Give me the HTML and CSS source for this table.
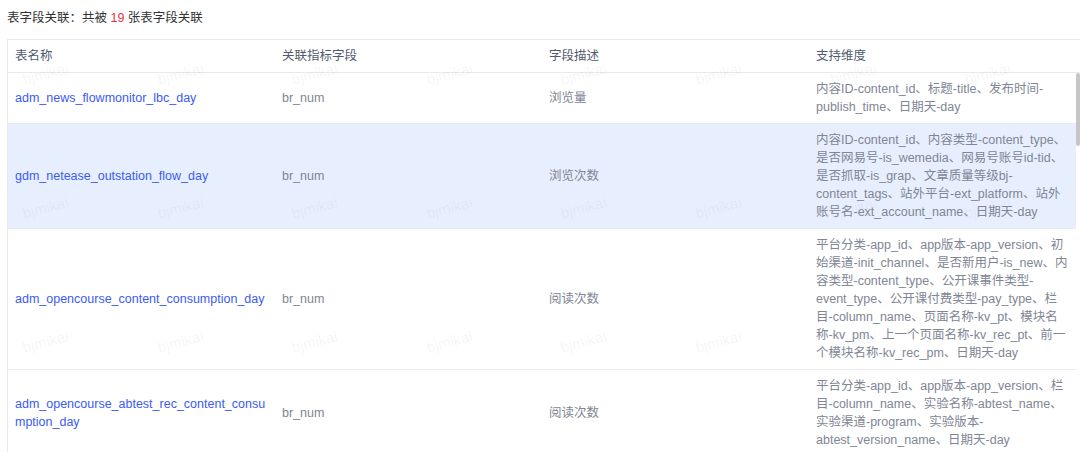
FILE: index.html
```html
<!DOCTYPE html>
<html lang="zh-CN">
<head>
<meta charset="utf-8">
<title>表字段关联</title>
<link rel="stylesheet" href="styles.css">
</head>
<body>
<div class="page">
  <div class="title">表字段关联：共被 <span class="count">19</span> 张表字段关联</div>
  <div class="table">
    <div class="row head">
      <div class="cell">表名称</div>
      <div class="cell">关联指标字段</div>
      <div class="cell">字段描述</div>
      <div class="cell">支持维度</div>
    </div>
    <div class="body-wrap">
      <div class="body">
        <div class="row">
          <div class="cell link">adm_news_flowmonitor_lbc_day</div>
          <div class="cell">br_num</div>
          <div class="cell">浏览量</div>
          <div class="cell">内容ID-content_id、标题-title、发布时间-publish_time、日期天-day</div>
        </div>
        <div class="row hover">
          <div class="cell link">gdm_netease_outstation_flow_day</div>
          <div class="cell">br_num</div>
          <div class="cell">浏览次数</div>
          <div class="cell">内容ID-content_id、内容类型-content_type、是否网易号-is_wemedia、网易号账号id-tid、是否抓取-is_grap、文章质量等级bj-content_tags、站外平台-ext_platform、站外账号名-ext_account_name、日期天-day</div>
        </div>
        <div class="row">
          <div class="cell link">adm_opencourse_content_consumption_day</div>
          <div class="cell">br_num</div>
          <div class="cell">阅读次数</div>
          <div class="cell">平台分类-app_id、app版本-app_version、初始渠道-init_channel、是否新用户-is_new、内容类型-content_type、公开课事件类型-event_type、公开课付费类型-pay_type、栏目-column_name、页面名称-kv_pt、模块名称-kv_pm、上一个页面名称-kv_rec_pt、前一个模块名称-kv_rec_pm、日期天-day</div>
        </div>
        <div class="row">
          <div class="cell link">adm_opencourse_abtest_rec_content_consumption_day</div>
          <div class="cell">br_num</div>
          <div class="cell">阅读次数</div>
          <div class="cell">平台分类-app_id、app版本-app_version、栏目-column_name、实验名称-abtest_name、实验渠道-program、实验版本-abtest_version_name、日期天-day</div>
        </div>
      </div>
      <div class="scrollbar"><div class="thumb"></div></div>
    </div>
  </div>
  <div class="watermark" aria-hidden="true">
    <span>bjmikai</span><span>bjmikai</span><span>bjmikai</span><span>bjmikai</span><span>bjmikai</span><span>bjmikai</span><span>bjmikai</span><span>bjmikai</span>
    <span>bjmikai</span><span>bjmikai</span><span>bjmikai</span><span>bjmikai</span><span>bjmikai</span><span>bjmikai</span><span>bjmikai</span><span>bjmikai</span>
    <span>bjmikai</span><span>bjmikai</span><span>bjmikai</span><span>bjmikai</span><span>bjmikai</span><span>bjmikai</span><span>bjmikai</span><span>bjmikai</span>
  </div>
</div>
</body>
</html>
```

FILE: styles.css
```css
* { box-sizing: border-box; }
html, body {
  margin: 0;
  padding: 0;
  background: #ffffff;
}
body {
  width: 1080px;
  height: 452px;
  overflow: hidden;
  font-family: "Liberation Sans", Arial, "Noto Sans CJK SC", sans-serif;
  font-size: 12.5px;
  color: #515a6e;
}
.page {
  position: relative;
  height: 452px;
  overflow: hidden;
}
.title {
  padding: 10px 0 0 7px;
  height: 39px;
  line-height: 17px;
  color: #333333;
}
.count {
  color: #ed2f3a;
}
.table {
  margin-left: 7px;
  border-left: 1px solid #e8eaec;
  border-top: 1px solid #e8eaec;
}
.row {
  display: grid;
  grid-template-columns: 267px 267px 267px 1fr;
  border-bottom: 1px solid #e8eaec;
  align-items: center;
}
.row.head {
  height: 33px;
}
.row.hover {
  background: #e7effe;
}
.cell {
  padding: 7px 7px;
  line-height: 18px;
  color: #808695;
  word-break: break-word;
}
.head .cell {
  color: #515a6e;
  padding: 0 7px;
}
.cell.link {
  color: #3b5bf6;
  word-break: break-all;
}
.body-wrap {
  display: flex;
  height: 380px;
  overflow: hidden;
}
.body {
  flex: 1;
}
.scrollbar {
  width: 4px;
  flex: 0 0 4px;
}
.thumb {
  height: 73px;
  background: #c6c6c6;
  border-radius: 2px;
}
.watermark {
  position: absolute;
  left: -22px;
  top: 6px;
  display: grid;
  grid-template-columns: repeat(8, 134.6px);
  grid-auto-rows: 134px;
  pointer-events: none;
}
.watermark span {
  display: flex;
  align-items: center;
  justify-content: center;
  font-family: "Liberation Sans", Arial, sans-serif;
  font-size: 15px;
  color: rgba(120, 130, 170, 0.09);
  transform: rotate(-15deg);
}
```
